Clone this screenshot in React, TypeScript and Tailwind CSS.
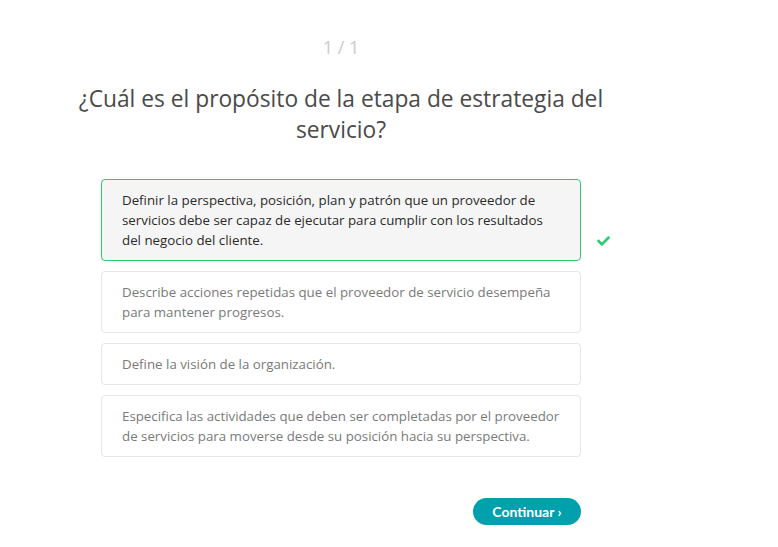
import { FaCheck } from 'react-icons/fa';

const opciones = [
  'Definir la perspectiva, posición, plan y patrón que un proveedor de servicios debe ser capaz de ejecutar para cumplir con los resultados del negocio del cliente.',
  'Describe acciones repetidas que el proveedor de servicio desempeña para mantener progresos.',
  'Define la visión de la organización.',
  'Especifica las actividades que deben ser completadas por el proveedor de servicios para moverse desde su posición hacia su perspectiva.',
];

export default function App() {
  const correcta = 0;

  return (
    <div className="min-h-screen bg-white font-['Open_Sans',sans-serif]">
      <div className="w-[682px] flex flex-col items-center pt-[35px]">
        <div className="text-[18px] leading-[24px] text-[#c9cccc]">1 / 1</div>
        <h1 className="mt-[24px] w-[560px] text-center text-[22.75px] leading-[31px] text-[#4a4a4a]">
          ¿Cuál es el propósito de la etapa de estrategia del servicio?
        </h1>

        <div className="mt-[34px] w-[480px] flex flex-col gap-[10px]">
          {opciones.map((texto, i) => (
            <div key={i} className="relative">
              <div
                className={
                  i === correcta
                    ? 'rounded-[4px] border border-[#2ecc71] bg-[#f5f5f5] px-[20px] py-[10px] text-[13.3px] leading-[20px] text-[#2b2b2b]'
                    : 'rounded-[4px] border border-[#e6e6e6] bg-white px-[20px] py-[10px] text-[13.3px] leading-[20px] text-[#7a7a7a]'
                }
              >
                {texto}
              </div>
              {i === correcta && (
                <FaCheck
                  className="absolute left-[496px] top-1/2 -translate-y-1/2 mt-[21px] text-[#2ecc71]"
                  size={13}
                />
              )}
            </div>
          ))}
        </div>

        <div className="mt-[41px] w-[480px] flex justify-end">
          <button className="h-[27px] w-[108px] rounded-full bg-[#00a0ac] font-['Lato',sans-serif] text-[14px] font-bold text-white">
            Continuar ›
          </button>
        </div>
      </div>
    </div>
  );
}
